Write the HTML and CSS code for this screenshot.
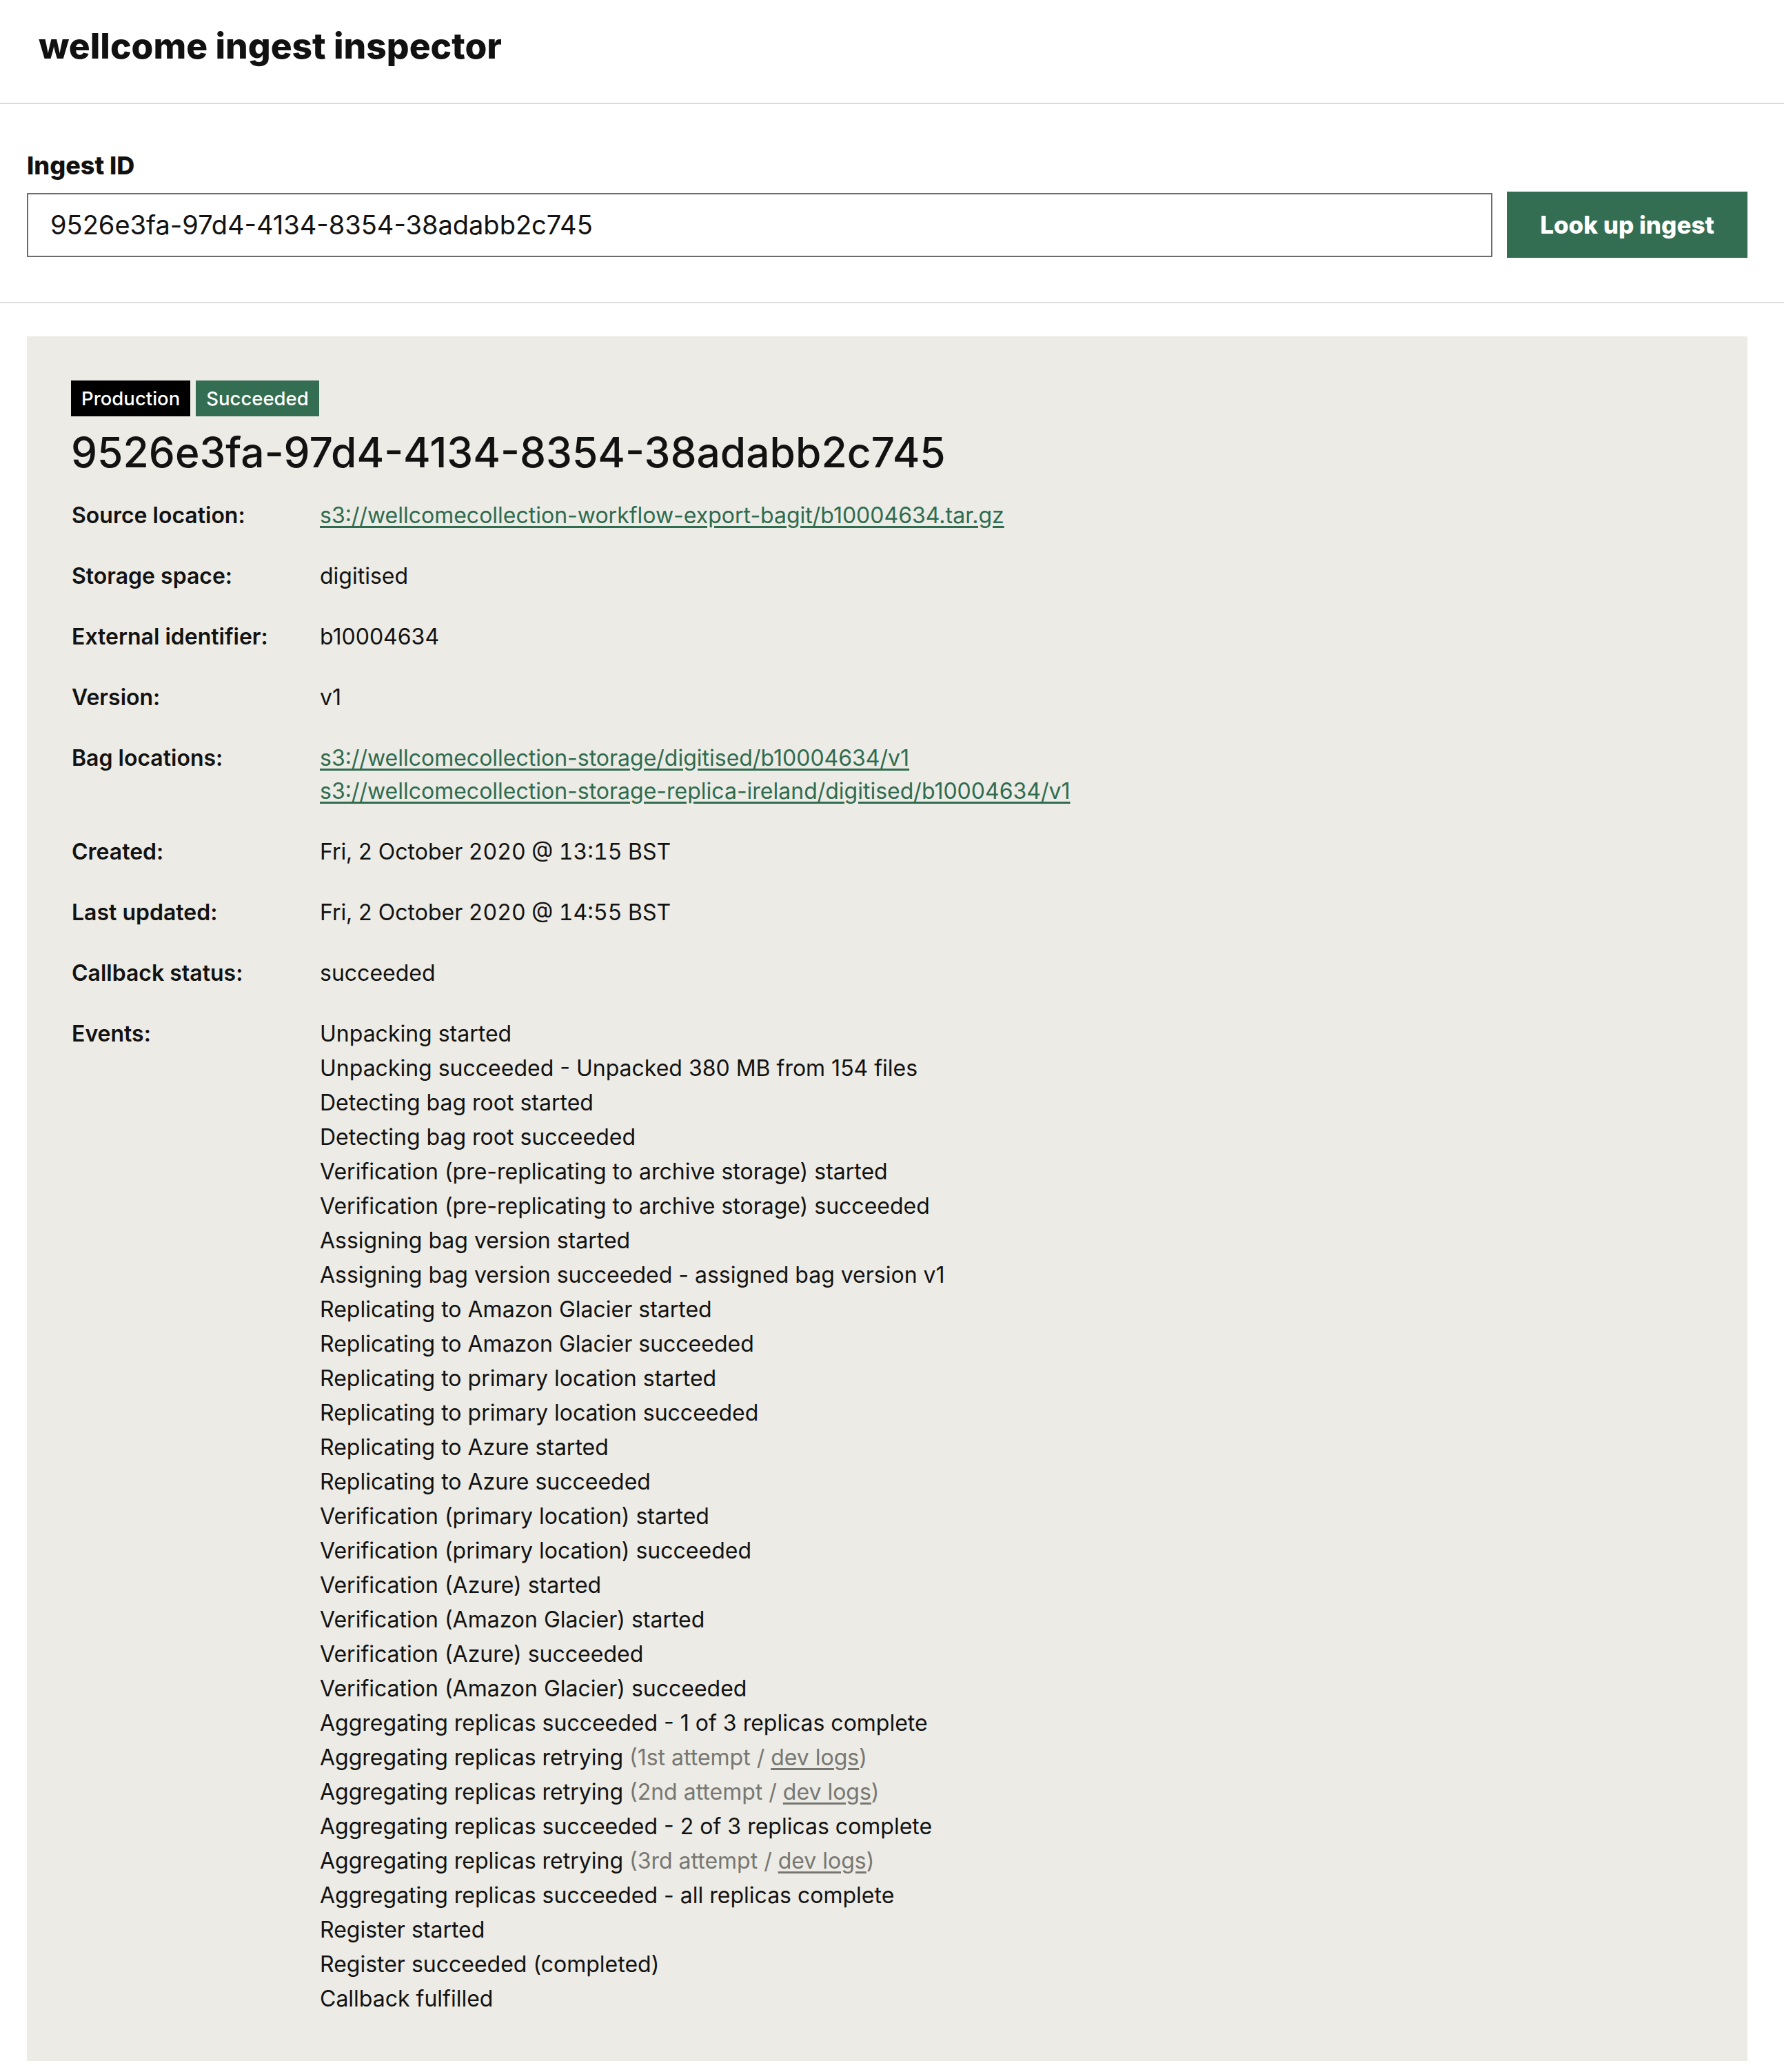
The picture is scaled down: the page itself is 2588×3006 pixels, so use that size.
FILE: index.html
```html
<!DOCTYPE html>
<html lang="en">
<head>
<meta charset="utf-8">
<title>wellcome ingest inspector</title>
<link rel="stylesheet" href="styles.css">
</head>
<body>
<header class="site-header">
  <h1 class="site-title">wellcome ingest inspector</h1>
</header>

<form class="lookup">
  <label class="lookup-label" for="ingest-id">Ingest ID</label>
  <div class="lookup-row">
    <input id="ingest-id" class="lookup-input" type="text" value="9526e3fa-97d4-4134-8354-38adabb2c745">
    <button class="lookup-button" type="button">Look up ingest</button>
  </div>
</form>

<main class="ingest">
  <div class="badges">
    <span class="badge badge-env">Production</span>
    <span class="badge badge-status">Succeeded</span>
  </div>
  <h2 class="ingest-id">9526e3fa-97d4-4134-8354-38adabb2c745</h2>

  <dl class="details">
    <div class="row">
      <dt>Source location:</dt>
      <dd><a href="#">s3://wellcomecollection-workflow-export-bagit/b10004634.tar.gz</a></dd>
    </div>
    <div class="row">
      <dt>Storage space:</dt>
      <dd>digitised</dd>
    </div>
    <div class="row">
      <dt>External identifier:</dt>
      <dd>b10004634</dd>
    </div>
    <div class="row">
      <dt>Version:</dt>
      <dd>v1</dd>
    </div>
    <div class="row">
      <dt>Bag locations:</dt>
      <dd>
        <a href="#">s3://wellcomecollection-storage/digitised/b10004634/v1</a><br>
        <a href="#">s3://wellcomecollection-storage-replica-ireland/digitised/b10004634/v1</a>
      </dd>
    </div>
    <div class="row">
      <dt>Created:</dt>
      <dd class="date">Fri, 2 October 2020 @ 13:15 BST</dd>
    </div>
    <div class="row">
      <dt>Last updated:</dt>
      <dd class="date">Fri, 2 October 2020 @ 14:55 BST</dd>
    </div>
    <div class="row">
      <dt>Callback status:</dt>
      <dd>succeeded</dd>
    </div>
    <div class="row">
      <dt>Events:</dt>
      <dd>
        <ul class="events">
          <li>Unpacking started</li>
          <li>Unpacking succeeded - Unpacked 380 MB from 154 files</li>
          <li>Detecting bag root started</li>
          <li>Detecting bag root succeeded</li>
          <li>Verification (pre-replicating to archive storage) started</li>
          <li>Verification (pre-replicating to archive storage) succeeded</li>
          <li>Assigning bag version started</li>
          <li>Assigning bag version succeeded - assigned bag version v1</li>
          <li>Replicating to Amazon Glacier started</li>
          <li>Replicating to Amazon Glacier succeeded</li>
          <li>Replicating to primary location started</li>
          <li>Replicating to primary location succeeded</li>
          <li>Replicating to Azure started</li>
          <li>Replicating to Azure succeeded</li>
          <li>Verification (primary location) started</li>
          <li>Verification (primary location) succeeded</li>
          <li>Verification (Azure) started</li>
          <li>Verification (Amazon Glacier) started</li>
          <li>Verification (Azure) succeeded</li>
          <li>Verification (Amazon Glacier) succeeded</li>
          <li>Aggregating replicas succeeded - 1 of 3 replicas complete</li>
          <li>Aggregating replicas retrying <span class="retry">(1st attempt / <a href="#">dev logs</a>)</span></li>
          <li>Aggregating replicas retrying <span class="retry">(2nd attempt / <a href="#">dev logs</a>)</span></li>
          <li>Aggregating replicas succeeded - 2 of 3 replicas complete</li>
          <li>Aggregating replicas retrying <span class="retry">(3rd attempt / <a href="#">dev logs</a>)</span></li>
          <li>Aggregating replicas succeeded - all replicas complete</li>
          <li>Register started</li>
          <li>Register succeeded (completed)</li>
          <li>Callback fulfilled</li>
        </ul>
      </dd>
    </div>
  </dl>
</main>
</body>
</html>
```

FILE: styles.css
```css
* {
  box-sizing: border-box;
}

html, body {
  margin: 0;
  padding: 0;
  background: #ffffff;
}

body {
  font-family: Inter, "Noto Sans", sans-serif;
  font-size: 32px;
  color: #121212;
  padding-bottom: 16px;
}

.site-header {
  height: 151px;
  padding: 40px 56px 0;
  border-bottom: 2px solid #dcdcd6;
}

.site-title {
  margin: 0;
  font-size: 51.5px;
  line-height: 52px;
  font-weight: 800;
  letter-spacing: 0;
  color: #111111;
}

.lookup {
  padding: 69px 53px 64px 39px;
  border-bottom: 2px solid #dedede;
}

.lookup-label {
  display: block;
  font-size: 36px;
  line-height: 40px;
  font-weight: 800;
  margin-bottom: 18px;
  color: #111111;
}

.lookup-row {
  display: flex;
  align-items: center;
  gap: 21px;
}

.lookup-input {
  flex: 1;
  height: 93px;
  border: 2px solid #6b6b6b;
  border-radius: 0;
  padding: 0 32px;
  font-family: Inter, "Noto Sans", sans-serif;
  font-size: 38px;
  color: #121212;
  background: #ffffff;
}

.lookup-button {
  width: 349px;
  height: 96px;
  border: 0;
  border-radius: 0;
  background: #346e52;
  color: #ffffff;
  font-family: Inter, "Noto Sans", sans-serif;
  font-size: 35px;
  font-weight: 800;
  padding: 0;
}

.ingest {
  margin: 48px 53px 0 39px;
  background: #ecebe5;
  padding: 64px 64px 65px 64px;
}

.badges {
  display: flex;
  gap: 8px;
}

.badge {
  display: inline-block;
  height: 52px;
  line-height: 52px;
  padding: 0 15px;
  font-size: 27.5px;
  font-weight: 500;
  color: #ffffff;
}

.badge-env {
  background: #000000;
}

.badge-status {
  background: #346e52;
}

.ingest-id {
  margin: 16px 0 32px;
  font-size: 60.5px;
  line-height: 72px;
  font-weight: 500;
  color: #121212;
}

.details {
  margin: 0;
}

.row {
  display: flex;
  margin-bottom: 40px;
  line-height: 48px;
}

.row:last-child {
  margin-bottom: 0;
}

.row dt {
  width: 361px;
  flex: none;
  font-weight: 600;
  padding-left: 1px;
}

.row dd {
  margin: 0;
}

.row .date {
  font-variant-numeric: tabular-nums;
}

.row a {
  color: #2f6b4f;
  text-decoration: underline;
  text-underline-offset: 4px;
}

.events {
  list-style: none;
  margin: 0;
  padding: 0;
}

.events li {
  line-height: 50px;
}

.events li:first-child {
  margin-top: -1px;
}

.retry {
  color: #777772;
}

.row .retry a {
  color: #777772;
}
```
